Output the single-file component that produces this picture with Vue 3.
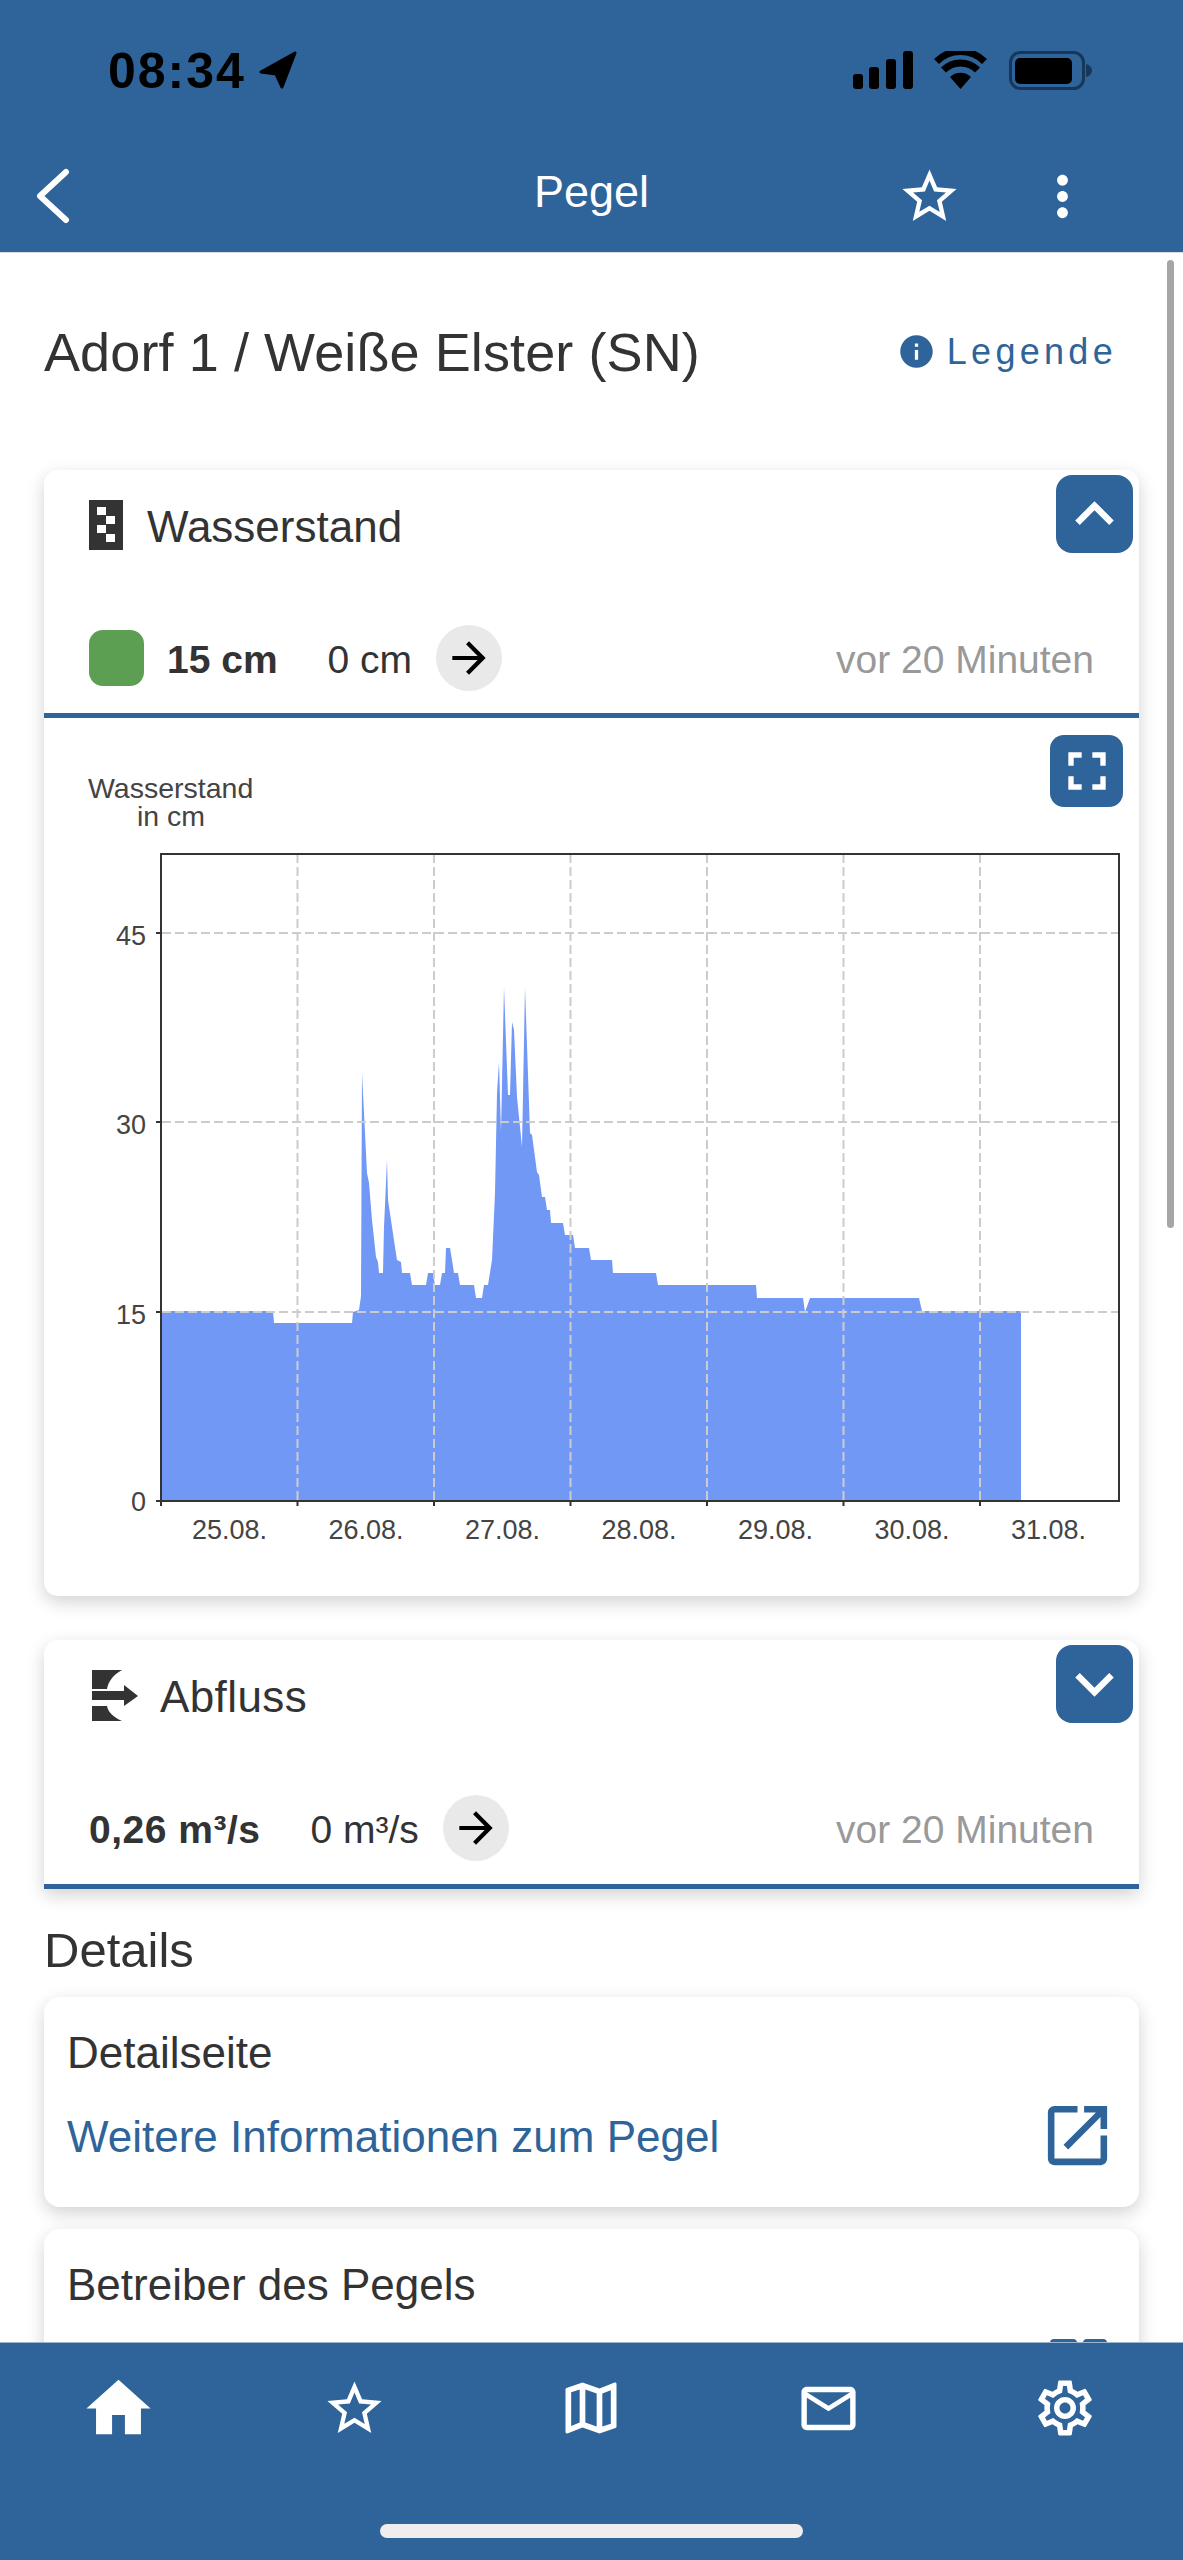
<script setup>
// Messreihe in Pixeln der Zeichenflaeche
const outline = [
  [161,1311],[273,1311],[274,1323],[352,1323],[353,1312],[359,1310],[361,1296],[362,1073],[367,1173],[369,1183],[372,1220],
  [376,1257],[378,1262],[379,1273],[383,1273],[384,1227],[387,1160],[388,1200],[395,1247],[397,1260],[401,1262],
  [402,1273],[410,1273],[412,1285],[426,1285],[428,1273],[433,1273],[435,1285],[440,1285],[442,1273],[445,1273],
  [446,1248],[450,1248],[452,1260],[454,1273],[458,1273],[460,1285],[474,1285],[476,1298],[482,1298],[484,1285],
  [488,1285],[492,1260],[495,1193],[497,1093],[499,1062],[501,1132],[504,987],[508,1095],[510,1095],[512,1022],
  [514,1030],[517,1097],[522,1147],[525,987],[530,1133],[532,1135],[537,1172],[539,1175],[542,1197],[545,1197],
  [547,1210],[550,1210],[551,1223],[563,1223],[565,1235],[573,1235],[575,1248],[589,1248],[591,1260],[612,1260],
  [613,1273],[656,1273],[658,1285],[756,1285],[757,1298],[803,1298],[805,1312],[810,1298],[919,1298],[922,1311],
  [1021,1311],[1021,1501],[161,1501],
]
const area = outline.map(p => p.join(',')).join(' ')

const gridX = [297.5, 434, 570.5, 707, 843.5, 980]
const gridY = [{ y: 933, label: '45' }, { y: 1122, label: '30' }, { y: 1312, label: '15' }]
const days = ['25.08.', '26.08.', '27.08.', '28.08.', '29.08.', '30.08.', '31.08.']

const tabs = [
  { name: 'home', size: 77, d: 'M10 20v-6h4v6h5v-8h3L12 3 2 12h3v8z' },
  { name: 'star', size: 65, d: 'M22 9.24l-7.19-.62L12 2 9.19 8.63 2 9.24l5.46 4.73L5.82 21 12 17.27 18.18 21l-1.63-7.03L22 9.24zM12 15.4l-3.76 2.27 1-4.28-3.32-2.88 4.38-.38L12 6.1l1.71 4.04 4.38.38-3.32 2.88 1 4.28L12 15.4z' },
  { name: 'map', size: 68, d: 'M20.5 3l-.16.03L15 5.1 9 3 3.36 4.9c-.21.07-.36.25-.36.48V20.5c0 .28.22.5.5.5l.16-.03L9 18.9l6 2.1 5.64-1.9c.21-.07.36-.25.36-.48V3.5c0-.28-.22-.5-.5-.5zM10 5.47l4 1.4v11.66l-4-1.4V5.47zm-5 .99l3-1.01v11.7l-3 1.16V6.46zm14 11.08l-3 1.01V6.86l3-1.16v11.84z' },
  { name: 'mail', size: 65, d: 'M20 4H4c-1.1 0-1.99.9-1.99 2L2 18c0 1.1.9 2 2 2h16c1.1 0 2-.9 2-2V6c0-1.1-.9-2-2-2zm0 14H4V8l8 5 8-5v10zm-8-7L4 6h16l-8 5z' },
  { name: 'settings', size: 66, d: 'M19.43 12.98c.04-.32.07-.64.07-.98 0-.34-.03-.66-.07-.98l2.11-1.65c.19-.15.24-.42.12-.64l-2-3.46c-.09-.16-.26-.25-.44-.25-.06 0-.12.01-.17.03l-2.49 1c-.52-.4-1.08-.73-1.69-.98l-.38-2.65C14.46 2.18 14.25 2 14 2h-4c-.25 0-.46.18-.49.42l-.38 2.65c-.61.25-1.17.59-1.69.98l-2.49-1c-.06-.02-.12-.03-.18-.03-.17 0-.34.09-.43.25l-2 3.46c-.13.22-.07.49.12.64l2.11 1.65c-.04.32-.07.65-.07.98 0 .33.03.66.07.98l-2.11 1.65c-.19.15-.24.42-.12.64l2 3.46c.09.16.26.25.44.25.06 0 .12-.01.17-.03l2.49-1c.52.4 1.08.73 1.69.98l.38 2.65c.03.24.24.42.49.42h4c.25 0 .46-.18.49-.42l.38-2.65c.61-.25 1.17-.59 1.69-.98l2.49 1c.06.02.12.03.18.03.17 0 .34-.09.43-.25l2-3.46c.12-.22.07-.49-.12-.64l-2.11-1.65zm-1.98-1.71c.04.31.05.52.05.73 0 .21-.02.43-.05.73l-.14 1.13.89.7 1.08.84-.7 1.21-1.27-.51-1.04-.42-.9.68c-.43.32-.84.56-1.25.73l-1.06.43-.16 1.13-.2 1.35h-1.4l-.19-1.35-.16-1.13-1.06-.43c-.43-.18-.83-.41-1.23-.71l-.91-.7-1.06.43-1.27.51-.7-1.21 1.08-.84.89-.7-.14-1.13c-.03-.31-.05-.54-.05-.74s.02-.43.05-.73l.14-1.13-.89-.7-1.08-.84.7-1.21 1.27.51 1.04.42.9-.68c.43-.32.84-.56 1.25-.73l1.06-.43.16-1.13.2-1.35h1.39l.19 1.35.16 1.13 1.06.43c.43.18.83.41 1.23.71l.91.7 1.06-.43 1.27-.51.7 1.21-1.07.85-.89.7.14 1.13zM12 8c-2.21 0-4 1.79-4 4s1.79 4 4 4 4-1.79 4-4-1.79-4-4-4zm0 6c-1.1 0-2-.9-2-2s.9-2 2-2 2 .9 2 2-.9 2-2 2z' },
]

const starPath = tabs[1].d
const arrowPath = 'M12 4l-1.41 1.41L16.17 11H4v2h12.17l-5.58 5.59L12 20l8-8z'
const openPath = 'M19 19H5V5h7V3H5c-1.11 0-2 .9-2 2v14c0 1.1.89 2 2 2h14c1.1 0 2-.9 2-2v-7h-2v7zM14 3v2h3.59l-9.83 9.83 1.41 1.41L19 6.41V10h2V3h-7z'
</script>

<template>
  <div class="app">
    <header class="header">
      <div class="status">
        <span class="time">08:34</span>
        <svg class="loc" width="38" height="38" viewBox="0 0 38 38"><path d="M36 2L2 21l15 2 6 13z" fill="#000" stroke="#000" stroke-width="3" stroke-linejoin="round"/></svg>
        <div class="status-right">
          <svg width="60" height="38" viewBox="0 0 60 38">
            <rect x="0" y="23" width="10" height="15" rx="3"/>
            <rect x="16" y="16" width="10" height="22" rx="3"/>
            <rect x="33" y="8" width="10" height="30" rx="3"/>
            <rect x="50" y="0" width="10" height="38" rx="3"/>
          </svg>
          <svg width="53" height="38" viewBox="0 0 53 38">
            <path d="M26.5 38L16 26a15 15 0 0 1 21 0z"/>
            <path d="M9.5 19a24 24 0 0 1 34 0" fill="none" stroke="#000" stroke-width="7"/>
            <path d="M2.5 10.5a34 34 0 0 1 48 0" fill="none" stroke="#000" stroke-width="7"/>
          </svg>
          <svg width="85" height="39" viewBox="0 0 85 39">
            <rect x="1.5" y="1.5" width="73" height="36" rx="10" fill="none" stroke="#17375a" stroke-width="3"/>
            <rect x="6" y="7" width="57" height="26" rx="5" fill="#000"/>
            <path d="M77 13c4 1 6 4 6 6.500s-2 5.500-6 6.500z" fill="#17375a"/>
          </svg>
        </div>
      </div>
      <div class="nav">
        <svg class="back" width="36" height="56" viewBox="0 0 36 56"><path d="M31 4L5 28l26 24" fill="none" stroke="#fff" stroke-width="6" stroke-linecap="round" stroke-linejoin="round"/></svg>
        <span class="nav-title">Pegel</span>
        <svg class="nav-star" width="65" height="65" viewBox="0 0 24 24"><path :d="starPath" fill="#fff"/></svg>
        <svg class="nav-more" width="65" height="65" viewBox="0 0 24 24"><path d="M12 8c1.100 0 2-.9 2-2s-.9-2-2-2-2 .9-2 2 .9 2 2 2zm0 2c-1.100 0-2 .9-2 2s.9 2 2 2 2-.9 2-2-.9-2-2-2zm0 6c-1.100 0-2 .9-2 2s.9 2 2 2 2-.9 2-2-.9-2-2-2z" fill="#fff"/></svg>
      </div>
    </header>

    <main class="main">
      <div class="title-row">
        <h1>Adorf 1 / Weiße Elster (SN)</h1>
        <a class="legend">
          <svg width="39" height="39" viewBox="0 0 24 24"><path d="M12 2C6.480 2 2 6.480 2 12s4.480 10 10 10 10-4.480 10-10S17.520 2 12 2zm1 15h-2v-6h2v6zm0-8h-2V7h2v2z" fill="#2e6499"/></svg>
          <span>Legende</span>
        </a>
      </div>

      <section class="card">
        <div class="head">
          <div class="head-title">
            <svg width="34" height="50" viewBox="0 0 34 50">
              <rect width="34" height="50" fill="#333"/>
              <rect x="8" y="7" width="9" height="8" fill="#fff"/>
              <rect x="17" y="16" width="9" height="8" fill="#fff"/>
              <rect x="8" y="25" width="9" height="8" fill="#fff"/>
              <rect x="17" y="34" width="9" height="8" fill="#fff"/>
            </svg>
            <span>Wasserstand</span>
          </div>
          <button class="toggle">
            <svg width="78" height="78" viewBox="0 0 24 24"><path d="M12 8l-6 6 1.410 1.410L12 10.830l4.590 4.580L18 14z" fill="#fff"/></svg>
          </button>
        </div>
        <div class="value">
          <span class="state"></span>
          <b>15 cm</b>
          <span class="delta">0 cm</span>
          <span class="trend"><svg width="50" height="50" viewBox="0 0 24 24"><path :d="arrowPath" fill="#000"/></svg></span>
          <span class="age">vor 20 Minuten</span>
        </div>
        <div class="chart">
          <svg class="plot" width="1095" height="878" viewBox="44 718 1095 878">
            <text x="88" y="798" class="axis-title">Wasserstand</text>
            <text x="171" y="826" class="axis-title" text-anchor="middle">in cm</text>
            <polygon :points="area" fill="#7298f6"/>
            <line v-for="x in gridX" :key="x" :x1="x" :x2="x" y1="854" y2="1500" class="grid"/>
            <line v-for="g in gridY" :key="g.y" x1="162" x2="1118" :y1="g.y" :y2="g.y" class="grid"/>
            <rect x="161" y="854" width="958" height="647" fill="none" stroke="#333" stroke-width="2"/>
            <line v-for="x in [161, ...gridX]" :key="'t' + x" :x1="x" :x2="x" y1="1501" y2="1506" stroke="#333" stroke-width="2"/>
            <line v-for="g in [...gridY, { y: 1501 }]" :key="'l' + g.y" x1="156" x2="161" :y1="g.y" :y2="g.y" stroke="#333" stroke-width="2"/>
            <text v-for="g in gridY" :key="g.label" x="146" :y="g.y + 12" class="tick" text-anchor="end">{{ g.label }}</text>
            <text x="146" y="1511" class="tick" text-anchor="end">0</text>
            <text v-for="(d, i) in days" :key="d" :x="229.500 + i * 136.500" y="1539" class="tick" text-anchor="middle">{{ d }}</text>
          </svg>
          <button class="fullscreen">
            <svg width="64" height="64" viewBox="0 0 24 24"><path d="M7 14H5v5h5v-2H7v-3zm-2-4h2V7h3V5H5v5zm12 7h-3v2h5v-5h-2v3zM14 5v2h3v3h2V5h-5z" fill="#fff"/></svg>
          </button>
        </div>
      </section>

      <section class="card card-second">
        <div class="head">
          <div class="head-title head-title-flow">
            <svg width="46" height="51" viewBox="0 0 46 51" fill="#333">
              <path d="M0 0H30C21 5 16 12 15 19H0z"/>
              <path d="M0 21H32V15L46 26 32 36V30H0z"/>
              <path d="M0 36H15C16 42 21 47 30 51H0z"/>
            </svg>
            <span>Abfluss</span>
          </div>
          <button class="toggle">
            <svg width="78" height="78" viewBox="0 0 24 24"><path d="M16.590 8.590L12 13.170 7.410 8.590 6 10l6 6 6-6z" fill="#fff"/></svg>
          </button>
        </div>
        <div class="value">
          <b class="flow">0,26 m³/s</b>
          <span class="delta">0 m³/s</span>
          <span class="trend"><svg width="50" height="50" viewBox="0 0 24 24"><path :d="arrowPath" fill="#000"/></svg></span>
          <span class="age">vor 20 Minuten</span>
        </div>
      </section>

      <h2>Details</h2>

      <section class="info">
        <div class="info-title">Detailseite</div>
        <div class="info-link">
          <a>Weitere Informationen zum Pegel</a>
          <svg width="79" height="79" viewBox="0 0 24 24"><path :d="openPath" fill="#2e6499"/></svg>
        </div>
      </section>

      <section class="info info-next">
        <div class="info-title">Betreiber des Pegels</div>
        <div class="peek"><span></span><span></span></div>
      </section>
    </main>

    <div class="scrollbar"></div>

    <footer class="tabbar">
      <div class="tabs">
        <div v-for="t in tabs" :key="t.name" class="tab">
          <svg :width="t.size" :height="t.size" viewBox="0 0 24 24"><path :d="t.d" fill="#fff"/></svg>
        </div>
      </div>
      <div class="home-bar"></div>
    </footer>
  </div>
</template>

<style>
html, body { margin: 0; background: #fff; }
</style>

<style scoped>
.app {
  position: relative;
  width: 1183px;
  height: 2560px;
  overflow: hidden;
  display: flex;
  flex-direction: column;
  background: #fff;
  color: #333;
  font-family: "Liberation Sans", Arial, sans-serif;
}
.header {
  flex: none;
  height: 252px;
  background: #2e6499;
  border-bottom: 1px solid #ddd;
  box-sizing: content-box;
}
.status {
  height: 140px;
  display: flex;
  align-items: center;
  padding: 0 89px 0 108px;
}
.time {
  font-size: 50px;
  font-weight: 700;
  color: #000;
  letter-spacing: 2px;
  margin-top: 1px;
}
.loc { margin-left: 13px; }
.status-right {
  margin-left: auto;
  display: flex;
  align-items: center;
  gap: 21px;
}
.status-right svg:last-child { margin-left: 1px; }
.nav {
  position: relative;
  height: 112px;
  display: flex;
  align-items: center;
  padding-left: 35px;
}
.nav-title {
  position: absolute;
  left: 0;
  right: 0;
  top: 26px;
  text-align: center;
  color: #fff;
  font-size: 45px;
}
.nav-star { position: absolute; left: 897px; top: 24px; }
.nav-more { position: absolute; left: 1030px; top: 24px; }

.main {
  flex: 1;
  min-height: 0;
  overflow: hidden;
  padding: 0 44px;
  margin-bottom: -1px;
}
.title-row {
  height: 197px;
  margin-bottom: 20px;
  display: flex;
  align-items: center;
  justify-content: space-between;
  padding-right: 22px;
}
h1 {
  margin: 0;
  font-size: 54px;
  letter-spacing: .1px;
  font-weight: 400;
}
.legend {
  display: flex;
  align-items: center;
  gap: 11px;
  color: #2e6499;
  font-size: 36px;
  letter-spacing: 4.3px;
}
.card {
  background: #fff;
  border-radius: 14px;
  box-shadow: 0 6px 18px rgba(0, 0, 0, .18);
}
.card-second {
  margin-top: 44px;
  border-radius: 14px 14px 0 0;
}
.card-second .value { padding-bottom: 23px; }
.head {
  display: flex;
  justify-content: space-between;
  align-items: flex-start;
  padding: 5px 6px 0 45px;
}
.head-title {
  display: flex;
  align-items: center;
  gap: 24px;
  margin-top: 23px;
  font-size: 44px;
}
.head-title span { margin-top: 4px; }
.head-title-flow { margin-left: 3px; gap: 22px; letter-spacing: .4px; }
.toggle, .fullscreen {
  display: flex;
  align-items: center;
  justify-content: center;
  padding: 0;
  border: 0;
  background: #2e6499;
}
.toggle {
  width: 77px;
  height: 78px;
  border-radius: 16px;
}
.value {
  display: flex;
  align-items: center;
  padding: 72px 45px 22px;
  border-bottom: 5px solid #2e6499;
  font-size: 39px;
}
.value b, .delta, .age { margin-top: 3px; }
.flow { letter-spacing: .5px; }
.state {
  width: 55px;
  height: 56px;
  margin-right: 23px;
  border-radius: 14px;
  background: #5c9e52;
}
.delta { margin-left: 50px; }
.trend {
  width: 66px;
  height: 66px;
  margin-left: 24px;
  display: flex;
  align-items: center;
  justify-content: center;
  border-radius: 50%;
  background: #e9e9e9;
}
.age {
  margin-left: auto;
  color: #999;
}
.chart { position: relative; }
.plot { display: block; }
.grid {
  stroke: #ccc;
  stroke-width: 2;
  stroke-dasharray: 9 4;
}
.axis-title {
  font-size: 28.5px;
  fill: #444;
}
.tick {
  font-size: 27px;
  fill: #444;
}
.fullscreen {
  position: absolute;
  top: 17px;
  right: 16px;
  width: 73px;
  height: 72px;
  border-radius: 14px;
}
h2 {
  margin: 34px 0 20px;
  font-size: 49px;
  line-height: 54px;
  font-weight: 400;
}
.info {
  padding: 31px 22px 32px 23px;
  background: #fff;
  border-radius: 16px;
  box-shadow: 0 6px 18px rgba(0, 0, 0, .18);
  font-size: 44px;
  line-height: 50px;
}
.info-next { margin-top: 22px; }
.info-link {
  margin-top: 18px;
  display: flex;
  align-items: center;
  justify-content: space-between;
  color: #2e6499;
}
.info-link a { margin-top: 3px; }
.info-link svg { display: block; }
.peek {
  display: flex;
  justify-content: flex-end;
  gap: 6px;
  margin: 29px 10px 0 0;
}
.peek span {
  width: 27px;
  height: 20px;
  border-radius: 4px 4px 0 0;
  background: #2e6499;
}
.peek span:last-child { width: 24px; }
.scrollbar {
  position: absolute;
  top: 260px;
  left: 1167px;
  width: 7px;
  height: 968px;
  border-radius: 4px;
  background: #a6a6a6;
}
.tabbar {
  position: relative;
  flex: none;
  height: 217px;
  background: #2e6499;
  border-top: 1px solid #9db5cc;
}
.tabs { display: flex; }
.tab {
  flex: 1;
  height: 130px;
  display: flex;
  align-items: center;
  justify-content: center;
}
.home-bar {
  width: 423px;
  height: 14px;
  margin: 51px auto 0;
  border-radius: 7px;
  background: #eee;
}
</style>
